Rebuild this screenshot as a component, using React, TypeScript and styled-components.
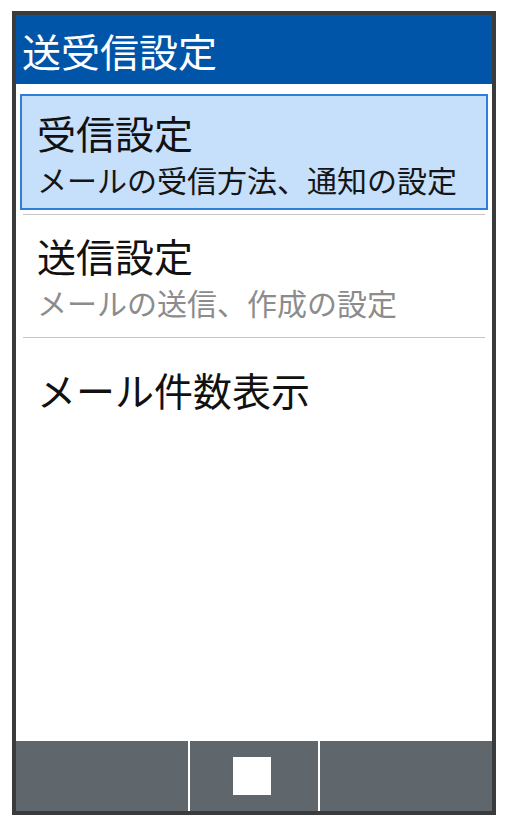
import styled, {createGlobalStyle} from 'styled-components'

const GlobalStyle = createGlobalStyle`
  html, body {
    margin: 0;
    padding: 0;
    background: #ffffff;
  }
  body {
    font-family: 'Noto Sans CJK JP', 'Noto Sans', sans-serif;
  }
`

type MenuItem = {
  title: string
  sub?: string
}

const ITEMS: MenuItem[] = [
  {title: '受信設定', sub: 'メールの受信方法、通知の設定'},
  {title: '送信設定', sub: 'メールの送信、作成の設定'},
  {title: 'メール件数表示'},
]

function SoftKeys() {
  return (
    <KeyBar>
      <Key />
      <Key>
        <CenterSquare />
      </Key>
      <Key />
    </KeyBar>
  )
}

export default function App() {
  const selected = 0

  return (
    <>
      <GlobalStyle />
      <Frame>
        <Header>
          <HeaderTitle>送受信設定</HeaderTitle>
        </Header>
        <List>
          {ITEMS.map((item, i) => (
            <Row key={item.title} $last={i === ITEMS.length - 1}>
              <Item $selected={i === selected} $single={!item.sub}>
                <Title>{item.title}</Title>
                {item.sub && <Sub $selected={i === selected}>{item.sub}</Sub>}
              </Item>
            </Row>
          ))}
        </List>
        <SoftKeys />
      </Frame>
    </>
  )
}

const Frame = styled.div`
  box-sizing: border-box;
  width: 484px;
  height: 804px;
  margin: 11px 0 0 12px;
  border: 4px solid #3a3b3c;
  display: flex;
  flex-direction: column;
  background: #ffffff;
`

const Header = styled.div`
  height: 69px;
  background: #0055a9;
  display: flex;
  align-items: center;
  padding-left: 6px;
`

const HeaderTitle = styled.h1`
  margin: 0;
  color: #ffffff;
  font-size: 39px;
  font-weight: 400;
  line-height: 46px;
  white-space: nowrap;
`

const List = styled.div`
  flex: 1;
  padding: 8px 7px 0;
  display: flex;
  flex-direction: column;
`

const Row = styled.div<{$last?: boolean}>`
  border-bottom: ${(p) => (p.$last ? 'none' : '1px solid #c4c4c4')};
`

const Item = styled.div<{$selected?: boolean; $single?: boolean}>`
  margin: 2px -3px 4px;
  border: 2px solid ${(p) => (p.$selected ? '#2f7fda' : 'transparent')};
  background: ${(p) => (p.$selected ? '#c6dffb' : 'transparent')};
  padding: ${(p) => (p.$single ? '24px 15px' : '13px 15px 11px')};
  display: flex;
  flex-direction: column;
  gap: 6px;
`

const Title = styled.div`
  font-size: 39px;
  line-height: 46px;
  color: #111111;
  white-space: nowrap;
`

const Sub = styled.div<{$selected?: boolean}>`
  font-size: 30px;
  line-height: 36px;
  color: ${(p) => (p.$selected ? '#151515' : '#8c8c8c')};
  white-space: nowrap;
`

const KeyBar = styled.div`
  height: 70px;
  display: grid;
  grid-template-columns: 172px 128px 1fr;
  gap: 2px;
  background: #ffffff;
`

const Key = styled.div`
  background: #5f676d;
  display: flex;
  align-items: center;
  justify-content: center;
`

const CenterSquare = styled.div`
  width: 38px;
  height: 38px;
  margin-right: 4px;
  background: #ffffff;
`
